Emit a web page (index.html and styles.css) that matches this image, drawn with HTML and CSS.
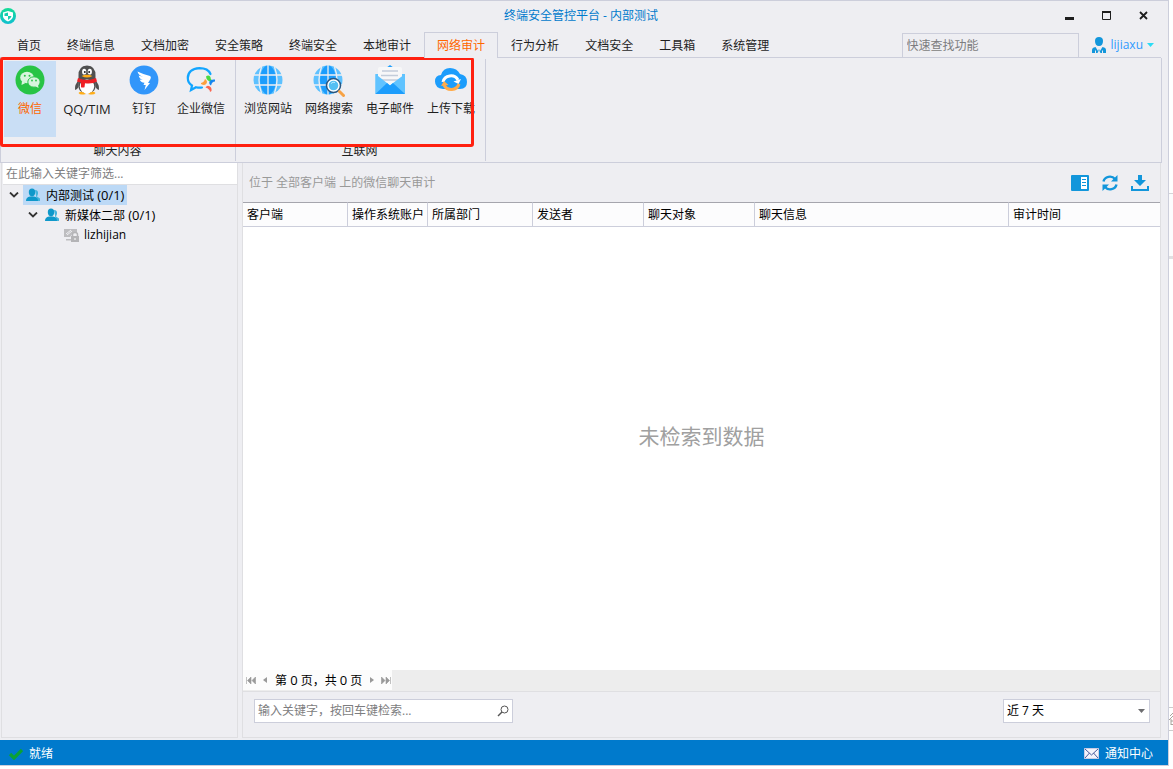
FILE: index.html
```html
<!DOCTYPE html>
<html lang="zh-CN">
<head>
<meta charset="utf-8">
<title>终端安全管控平台 - 内部测试</title>
<link rel="stylesheet" href="styles.css">
</head>
<body>
<div class="screen">
<div class="window">
  <header class="titlebar">
    <svg class="logo" width="16" height="16" viewBox="0 0 16 16"><defs><linearGradient id="lg" x1="0" y1="0" x2="0" y2="1"><stop offset="0" stop-color="#14dc96"/><stop offset="1" stop-color="#10bfd0"/></linearGradient></defs><circle cx="8" cy="8" r="8" fill="url(#lg)"/><path d="M8 3l5 1.500v4Q12.500 11.500 8 13.500 3.500 11.500 3 8.500v-4z" fill="#fff"/><path d="M8 4.500L4.500 5.500V8H8zM8 8h3.500Q11 10.500 8 12z" fill="#13cdb0"/></svg>
    <h1 class="title">终端安全管控平台 - 内部测试</h1>
    <div class="controls">
      <button class="control" aria-label="最小化"><svg width="12" height="12"><path d="M1 7h9v3H1z" fill="#1e1e1e"/></svg></button>
      <button class="control" aria-label="最大化"><svg width="12" height="12"><path d="M1.500 2.500h8v7h-8z" fill="none" stroke="#1e1e1e"/><path d="M1 1h9v2H1z" fill="#1e1e1e"/></svg></button>
      <button class="control" aria-label="关闭"><svg width="12" height="12"><path d="M2 2l7 7M9 2L2 9" stroke="#1e1e1e" stroke-width="1.800"/></svg></button>
    </div>
  </header>

  <div class="tabrow">
    <nav class="tabs">
      <a class="tab" href="#">首页</a><a class="tab" href="#">终端信息</a><a class="tab" href="#">文档加密</a><a class="tab" href="#">安全策略</a><a class="tab" href="#">终端安全</a><a class="tab" href="#">本地审计</a><a class="tab active" href="#">网络审计</a><a class="tab" href="#">行为分析</a><a class="tab" href="#">文档安全</a><a class="tab" href="#">工具箱</a><a class="tab" href="#">系统管理</a>
    </nav>
    <input class="quick" type="text" placeholder="快速查找功能" aria-label="快速查找功能">
    <button class="user">
      <svg width="16" height="18" viewBox="0 0 16 18"><path d="M4 5Q4 1 8 1t4 4Q12 10 8 10T4 5z" fill="#1296db"/><path d="M1 17v-3q0-2.500 3.500-3L7 15l1-2 1 2 2.500-4q3.500.500 3.500 3v3H9.500L8 14l-1.500 3z" fill="#1296db"/><path d="M4.500 14.500V17M11.500 14.500V17" stroke="#eeeef2"/></svg>
      <span>lijiaxu</span>
      <svg width="7" height="4"><path d="M0 0h7L3.500 4z" fill="#2bdcf5"/></svg>
    </button>
  </div>

  <div class="ribbon">
    <section class="group chat">
      <div class="tools">
        <button class="tool narrow selected"><svg width="30" height="30" viewBox="0 0 30 30"><circle cx="15" cy="15" r="14.500" fill="#28c445"/><ellipse cx="12" cy="12.500" rx="6.800" ry="5.800" fill="#d8f5dd"/><path d="M7 16l-.500 4 4-2z" fill="#d8f5dd"/><ellipse cx="19" cy="17" rx="6.200" ry="5.200" fill="#d8f5dd" stroke="#28c445"/><path d="M20 21l3.500 2-.500-3.500z" fill="#d8f5dd"/><g fill="#28c445"><circle cx="9.800" cy="10.800" r="1"/><circle cx="14.500" cy="10.800" r="1"/><circle cx="17" cy="15.500" r=".9"/><circle cx="21" cy="15.500" r=".9"/></g></svg><span>微信</span></button>
        <button class="tool"><svg width="30" height="30" viewBox="0 0 30 30"><path d="M7 15Q2.500 19 3 25q2 0 3.500-3M23 15q4.500 4 4 10-2 0-3.500-3" fill="#505050"/><path d="M15 .500Q6 1 6.500 11v7Q5 28 15 28t8.500-10v-7Q24 1 15 .500z" fill="#505050"/><ellipse cx="15" cy="21.500" rx="7.200" ry="7" fill="#fff"/><path d="M6.500 28q2-2 5-.500l2.500 1.500q-6 1.500-7.500-1M23.500 28q-2-2-5-.500L16 29q6 1.500 7.500-1" fill="#ffad17"/><ellipse cx="12.200" cy="6.700" rx="2.100" ry="2.900" fill="#fff"/><ellipse cx="17.800" cy="6.700" rx="2.100" ry="2.900" fill="#fff"/><circle cx="12.800" cy="7" r="1" fill="#222"/><circle cx="17.200" cy="7" r="1" fill="#222"/><path d="M9.500 11Q15 8.500 20.500 11 15 14 9.500 11z" fill="#ffad17"/><path d="M6 13q9 4 18 0l1 3.500q-4 2.500-12 1.700l-.500 4q-2 .500-3.500 0V17.500Q6 17 5 16.500z" fill="#ef1f24"/></svg><span class="latin">QQ/TIM</span></button>
        <button class="tool narrow"><svg width="30" height="30" viewBox="0 0 30 30"><circle cx="15" cy="15" r="14.400" fill="#3296fa"/><path d="M8.500 6.500q6 3 12.500 4.500 1.500.700.500 3L19 18h2l-5.500 7 1.300-5h-2.300l1-2.200q-4-.300-4.800-3.300l3 .500q-3.500-1.500-4-4.500l4.500 1.500Q9.300 10 8.500 6.500z" fill="#fff"/></svg><span>钉钉</span></button>
        <button class="tool"><svg width="30" height="30" viewBox="0 0 30 30"><path d="M24.500 9Q22 3.200 13.500 3.200 2 4 1.800 13q0 5 4.200 7.500l-1 4.500 5-2.800q3 .800 6 .300" fill="none" stroke="#12a5ff" stroke-width="2.200" stroke-linecap="round"/><path d="M15 18q3-.500 4-4 3 2 1.500 4.500T15 19z" fill="#fd9f3c"/><path d="M20 11.500q2.500-2 4.500.500 0 3 3 4-3.500 1.500-5.500-.500T20 11.500z" fill="#4ad943"/><path d="M29 16.500q-3 0-4 4-2.500-1.500-1.500-4t5.500-2z" fill="#1686f0"/><path d="M24 27q0-3-4.500-4.500 1.500-2.500 4-1.300t2 4.800z" fill="#fb6650"/></svg><span>企业微信</span></button>
      </div>
      <div class="caption">聊天内容</div>
    </section>
    <section class="group web">
      <div class="tools">
        <button class="tool"><svg width="30" height="30" viewBox="0 0 30 30"><g id="globe"><circle cx="15" cy="15" r="14.500" fill="#5ec1ff"/><ellipse cx="15" cy="15" rx="8" ry="14.500" fill="#1c9dfc"/><path d="M15 0v30M1 10h28M1 20h28M8.500 2Q3.500 15 8.500 28M21.500 2q5 13 0 26" fill="none" stroke="#eeeef2" stroke-width="1.300"/></g></svg><span>浏览网站</span></button>
        <button class="tool tall-icon"><svg width="32" height="32" viewBox="0 0 32 32"><use href="#globe"/><circle cx="20.500" cy="20.500" r="7" fill="#fff" stroke="#285680" stroke-width="1.500"/><circle cx="20.500" cy="20.500" r="4.800" fill="#54bff3"/><path d="M18 18.500q2-2 4-1" stroke="#b7e8ff" fill="none"/><path d="M26.500 26.500l4 4" stroke="#f7a245" stroke-width="3" stroke-linecap="round"/></svg><span>网络搜索</span></button>
        <button class="tool"><svg width="30" height="30" viewBox="0 0 30 30"><path d="M11 3l4-3 4 3z" fill="#1c9dfc"/><path d="M.500 9H30v20H.500z" fill="#60c3ff"/><path d="M3 4q0-2 2-2h20q2 0 2 2v11l-12 9L3 15z" fill="#f7f7f8"/><path d="M7 6h16M6 10.500h17M6 15h17" stroke="#c3ccd9" stroke-width="1.500"/><path d="M.500 29V9L12 18l3 2.500 3-2.500L30 9v20z" fill="#60c3ff"/><path d="M.500 29L12 18l3 2.500 3-2.500 12 11z" fill="#1c9dfc"/></svg><span>电子邮件</span></button>
        <button class="tool"><svg width="34" height="30" viewBox="0 0 34 30"><path d="M9 24Q1 23 1 16.500 1 10 7 10 9 3 16 3q7 0 10 6 7 1 7 8 0 7-7 7z" fill="#1c9dfc"/><path d="M9 17A8 7.500 0 0 1 24 15" fill="none" stroke="#fff" stroke-width="3"/><path d="M27 14l-2.500 5-5-2.500z" fill="#fff"/><path d="M25 19a8 7.500 0 0 1-15 1" fill="none" stroke="#ffab4b" stroke-width="3"/><path d="M7 21l3-5 4.500 4z" fill="#ffab4b"/></svg><span>上传下载</span></button>
      </div>
      <div class="caption">互联网</div>
    </section>
    <div class="highlight"></div>
  </div>

  <main class="workspace">
    <aside class="side">
      <input class="filter" type="text" placeholder="在此输入关键字筛选..." aria-label="筛选">
      <ul class="tree">
        <li class="node"><svg width="10" height="6"><path d="M1 .500l4 4 4-4" fill="none" stroke="#333" stroke-width="1.800"/></svg><span class="item current"><svg width="15" height="14" viewBox="0 0 15 14"><g id="people"><path d="M9 2q3.500 0 3 4l-1 2.500 3 2V13h-3z" fill="#45b4dc"/><path d="M2.800 4q0-3.500 3.200-3.500T9.200 4Q9.200 8 6 8.500 2.800 8 2.800 4z" fill="#0f98ca"/><path d="M0 13q0-4 4-4.500h4q4 .500 4 4.500z" fill="#0f98ca"/></g></svg><span>内部测试 <span class="latin">(0/1)</span></span></span></li>
        <li class="node level2"><svg width="10" height="6"><path d="M1 .500l4 4 4-4" fill="none" stroke="#333" stroke-width="1.800"/></svg><span class="item"><svg width="15" height="14" viewBox="0 0 15 14"><use href="#people"/></svg><span>新媒体二部 <span class="latin">(0/1)</span></span></span></li>
        <li class="node level3"><span class="item leaf"><svg width="16" height="14" viewBox="0 0 16 14"><path d="M0 1h13v4H9L6 9H0zM2 11h5v1.500H2z" fill="#bdbdc0"/><path d="M2 6l5-4M3 7l5-4" stroke="#eeeef2"/><path d="M7 8h8v6H7z" fill="#b4b4b7"/><path d="M8.500 8V6.500q0-2 2.500-2t2.500 2V8" fill="none" stroke="#b4b4b7" stroke-width="1.500"/><path d="M11 10v2" stroke="#fff"/></svg>lizhijian</span></li>
      </ul>
    </aside>

    <section class="content">
      <div class="toolbar">
        <span class="crumb">位于 全部客户端 上的微信聊天审计</span>
        <button class="act" aria-label="列设置"><svg width="18" height="16"><rect width="18" height="16" rx="1" fill="#1296db"/><path d="M10 2h6v12h-6z" fill="#fff"/><path d="M11 4.500h4M11 7.500h4M11 10.500h4" stroke="#1296db"/></svg></button>
        <button class="act" aria-label="刷新"><svg width="18" height="16" viewBox="0 0 18 16"><path d="M2.500 6.500A6.500 6 0 0 1 14 4M15.500 9.500A6.500 6 0 0 1 4 12" fill="none" stroke="#1296db" stroke-width="2.400"/><path d="M16.500 0v6.500H10zM1.500 16V9.500H8z" fill="#1296db"/></svg></button>
        <button class="act" aria-label="导出"><svg width="18" height="18" viewBox="0 0 18 18"><path d="M7 1h4v5h4l-6 6-6-6h4z" fill="#1296db"/><path d="M1 12v4h16v-4" fill="none" stroke="#1296db" stroke-width="2"/></svg></button>
      </div>
      <table class="grid">
        <colgroup><col class="c-mid"><col class="c-account"><col class="c-mid"><col class="c-wide"><col class="c-wide"><col class="c-info"><col></colgroup>
        <thead><tr><th>客户端</th><th>操作系统账户</th><th>所属部门</th><th>发送者</th><th>聊天对象</th><th>聊天信息</th><th>审计时间</th></tr></thead>
      </table>
      <div class="empty">未检索到数据</div>
      <div class="pager">
        <div class="pages">
          <button class="page" aria-label="第一页"><svg width="10" height="7"><path d="M.500 0v7M5 0v7L1.500 3.500zM9.500 0v7L6 3.500z" fill="#999" stroke="#999" stroke-width=".6"/></svg></button>
          <button class="page" aria-label="上一页"><svg width="4" height="6"><path d="M4 0v6L0 3z" fill="#999"/></svg></button>
          <span class="count">第 <span class="digit">0</span> 页，共 <span class="digit">0</span> 页</span>
          <button class="page" aria-label="下一页"><svg width="4" height="6"><path d="M0 0v6l4-3z" fill="#999"/></svg></button>
          <button class="page" aria-label="最后一页"><svg width="10" height="7"><path d="M9.500 0v7M.500 0v7L4 3.500zM5 0v7l3.500-3.500z" fill="#999" stroke="#999" stroke-width=".6"/></svg></button>
        </div>
      </div>
      <div class="searchbar">
        <div class="search"><input type="text" placeholder="输入关键字，按回车键检索..." aria-label="检索"><svg width="12" height="12"><circle cx="7.500" cy="4.500" r="3.500" fill="none" stroke="#555"/><path d="M5 7L1 11" stroke="#555" stroke-width="1.500"/></svg></div>
        <div class="range"><select aria-label="时间范围"><option>近 7 天</option></select><svg width="7" height="4"><path d="M0 0h7L3.500 4z" fill="#6d6d70"/></svg></div>
      </div>
    </section>
  </main>

  <footer class="status">
    <svg width="15" height="12" viewBox="0 0 15 12"><path d="M2 6l4 4 8-8" fill="none" stroke="#0ba136" stroke-width="3.200"/></svg>
    <span class="ready">就绪</span>
    <button class="notice"><svg width="15" height="11"><path d="M.500.500h14v10H.500z" fill="#f3f4fb" stroke="#c9cce4"/><path d="M1 1l6.500 6L14 1M1 10l4.500-5M14 10L9.500 5" fill="none" stroke="#4a5b9c"/></svg><span>通知中心</span></button>
  </footer>
</div>
<div class="behind"><div class="panel-edge"></div><div class="field-edge"><svg width="4" height="14"><path d="M4 1L1 4M4 4L0 8M2 7v6M2 9h2M2 12.500h2" fill="none" stroke="#a8a29c"/></svg></div></div>
</div>
</body>
</html>
```
FILE: styles.css
```css
* { box-sizing: border-box; }
body {
  margin: 0;
  background: #fff;
  color: #1e1e1e;
  font: 12px/16px "Open Sans", "Noto Sans CJK SC", sans-serif;
}
button, input, select { font: inherit; color: inherit; margin: 0; }
button { border: 0; padding: 0; background: none; }
a { color: inherit; text-decoration: none; }
svg { display: block; flex: none; }
input::placeholder { color: #7d7d80; opacity: 1; }
.latin, .digit { font-size: 13px; }

.screen { display: flex; height: 100vh; padding-bottom: 3px; }
.window {
  flex: 1;
  min-width: 0;
  display: flex;
  flex-direction: column;
  background: #eeeef2;
  border: 1px solid #cccedb;
  border-left: 0;
}

.titlebar {
  display: grid;
  grid-template-columns: 1fr auto 1fr;
  align-items: center;
  height: 31px;
  padding: 0 6px 2px 0;
}
.title { margin: 0; font-size: 12px; font-weight: 400; color: #007acc; }
.controls { display: flex; justify-content: flex-end; }
.control { width: 37px; height: 24px; display: flex; align-items: center; justify-content: center; }

.tabrow { display: flex; height: 26px; padding-right: 14px; position: relative; }
.tabrow::after {
  content: "";
  position: absolute;
  left: 0; right: 7px; bottom: 0;
  height: 1px;
  background: #cccedb;
}
.tabs { display: flex; flex: 1; padding-left: 4px; }
.tab { padding: 6px 13px 4px; white-space: nowrap; }
.tab.active {
  position: relative;
  z-index: 1;
  padding: 5px 12px 4px;
  border: 1px solid #cccedb;
  border-bottom: 0;
  background: #eeeef2;
  color: #ff6600;
}
.quick {
  width: 177px;
  margin: 1px 12px 0 0;
  padding: 0 4px;
  border: 1px solid #cccedb;
  background: #eeeef2;
}
.user { display: flex; align-items: center; gap: 4px; color: #2f9bff; }

.ribbon {
  position: relative;
  display: flex;
  height: 105px;
  margin-right: 6px;
  border: 1px solid #cccedb;
  border-top: 0;
}
.group { display: flex; flex-direction: column; position: relative; padding-top: 3px; }
.group::after { content: ""; position: absolute; right: 0; top: 1px; bottom: 1px; width: 1px; background: #cccedb; }
.chat { padding-left: 3px; padding-right: 5px; }
.web { padding-left: 2px; padding-right: 5px; }
.tools { display: flex; gap: 1px; }
.tool {
  width: 60px;
  height: 76px;
  padding-top: 4px;
  display: flex;
  flex-direction: column;
  align-items: center;
  gap: 6px;
  white-space: nowrap;
}
.tool.tall-icon { gap: 4px; }
.tool.narrow { width: 52px; }
.selected { background: #c9def5; color: #ff6600; }
.caption { margin-top: 6px; text-align: center; }
.highlight {
  position: absolute;
  left: -1px;
  top: -1px;
  width: 474px;
  height: 90px;
  border: 3px solid #ff2010;
  border-radius: 3px;
  pointer-events: none;
}

.workspace { flex: 1; min-height: 0; display: flex; gap: 4px; padding: 0 7px 2px 1px; }
.side { width: 237px; border: 1px solid #dfdfe2; border-top: 0; padding: 0 0 0 1px; }
.filter { display: block; width: 100%; height: 22px; border: 0; border-bottom: 1px solid #dfdfe2; padding: 0 3px; background: #fff; }
.tree { list-style: none; margin: 0; padding: 0; color: #000; }
.node { display: flex; align-items: center; height: 20px; gap: 4px; padding-left: 6px; }
.level2 { padding-left: 25px; }
.level3 { padding-left: 58px; }
.item { display: flex; align-items: center; gap: 5px; height: 20px; padding: 0 3px; white-space: nowrap; }
.leaf { gap: 4px; }
.current { background: #bcd9f6; }

.content { flex: 1; min-width: 0; display: flex; flex-direction: column; border: 1px solid #dfdfe2; border-top: 0; }
.toolbar { display: flex; align-items: center; gap: 12px; height: 39px; padding: 0 11px 0 6px; }
.crumb { flex: 1; color: #999; }
.act { width: 18px; display: flex; justify-content: center; }
.grid { width: 100%; table-layout: fixed; border-collapse: separate; border-spacing: 0; background: #fcfcfd; color: #000; }
.grid th {
  height: 25px;
  padding: 0 4px;
  text-align: left;
  font-weight: 400;
  white-space: nowrap;
  border-top: 1px solid #a5a5ad;
  border-bottom: 1px solid #cccedb;
  border-right: 1px solid #cccedb;
}
.grid th:last-child { border-right: 0; }
.grid th:nth-child(2) { padding-right: 0; }
.c-mid { width: 105px; }
.c-account { width: 80px; }
.c-wide { width: 111px; }
.c-info { width: 254px; }
.empty {
  flex: 1;
  display: flex;
  align-items: center;
  justify-content: center;
  padding-bottom: 25px;
  background: #fff;
  color: #a0a0a0;
  font-size: 21px;
  line-height: 28px;
}
.pager { height: 22px; background: #ededed; border-bottom: 1px solid #dfdfe2; }
.pages { display: inline-flex; align-items: center; gap: 7px; height: 20px; padding: 0 1px 0 3px; background: #fcfcfc; color: #000; }
.page { display: flex; }
.count { padding: 0 1px; }
.searchbar { display: flex; justify-content: space-between; padding: 7px 10px 14px 11px; }
.search, .range { position: relative; display: flex; align-items: center; height: 24px; border: 1px solid #cccedb; background: #fff; }
.search { width: 259px; padding-right: 3px; }
.search input { flex: 1; min-width: 0; border: 0; padding: 0 3px; background: none; }
.range { width: 147px; }
.range select { appearance: none; width: 100%; height: 22px; border: 0; padding: 0 3px; background: none; color: #000; }
.range svg { position: absolute; right: 4px; }

.status { display: flex; align-items: center; height: 25px; padding: 2px 15px 0 8px; background: #007acc; color: #fff; }
.ready { flex: 1; padding-left: 6px; }
.notice { display: flex; align-items: center; gap: 6px; }

.behind { width: 4px; display: flex; flex-direction: column; justify-content: space-between; padding: 193px 0 35px; background: #fff; }
.panel-edge { height: 66px; border-top: 1px solid #d5d5d8; border-bottom: 3px solid #e0e0e2; background: #fcfcfd; }
.field-edge { height: 24px; padding-top: 4px; border-top: 1px solid #ccc; border-bottom: 1px solid #ccc; }
```
